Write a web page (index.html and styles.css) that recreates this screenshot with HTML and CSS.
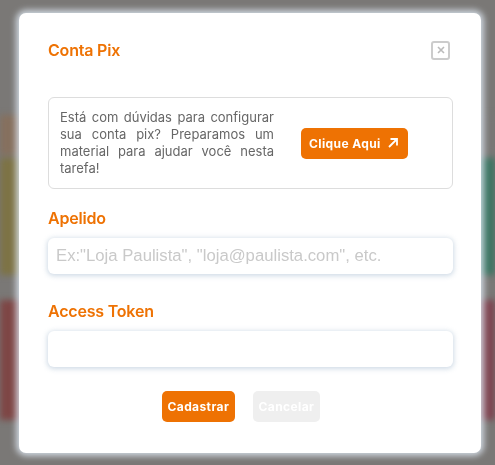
FILE: index.html
```html
<!DOCTYPE html>
<html lang="pt-BR">
<head>
    <meta charset="UTF-8">
    <meta name="viewport" content="width=device-width, initial-scale=1.0">
    <title>Conta Pix</title>
    <link rel="stylesheet" href="styles.css">
</head>
<body>

<div class="backdrop">
    <div class="bg-row">
        <div class="bg-card brown"></div>
        <div class="bg-card dark"></div>
    </div>
    <div class="bg-row tall first">
        <div class="bg-card olive"></div>
        <div class="bg-card teal"></div>
    </div>
    <div class="bg-row tall">
        <div class="bg-card red"></div>
        <div class="bg-card wine"></div>
    </div>
</div>

<div class="overlay">
    <div class="modal">
        <div class="modal-header">
            <h2>Conta Pix</h2>
            <button class="close-btn" aria-label="Fechar">
                <svg width="8" height="8" viewBox="0 0 8 8"><path d="M1 1L7 7M7 1L1 7" stroke="#bbb" stroke-width="1.6"/></svg>
            </button>
        </div>

        <div class="help-box">
            <p>Está com dúvidas para configurar sua conta pix? Preparamos um material para ajudar você nesta tarefa!</p>
            <button class="help-btn">Clique Aqui
                <svg width="12" height="12" viewBox="0 0 12 12"><path d="M2 10L10 2M3.5 2H10V8.5" stroke="#fff" stroke-width="1.8" fill="none"/></svg>
            </button>
        </div>

        <label class="field-label" for="apelido">Apelido</label>
        <input class="field-input" id="apelido" type="text" placeholder="Ex:&quot;Loja Paulista&quot;, &quot;loja@paulista.com&quot;, etc.">

        <label class="field-label" for="token">Access Token</label>
        <input class="field-input" id="token" type="text">

        <div class="actions">
            <button class="btn-primary">Cadastrar</button>
            <button class="btn-cancel">Cancelar</button>
        </div>
    </div>
</div>

</body>
</html>
```

FILE: styles.css
```css
body {
    margin: 0;
    padding: 0;
    font-family: Inter, "Liberation Sans", Arial, sans-serif;
    background-color: #7a7876;
    overflow: hidden;
}

.backdrop {
    height: 465px;
    padding-top: 115px;
    box-sizing: border-box;
    filter: blur(3px);
}
.bg-row {
    display: flex;
    justify-content: space-between;
    height: 40px;
}
.bg-row.tall {
    height: 120px;
    margin-top: 25px;
}
.bg-row.tall.first {
    height: 117px;
    margin-top: 3px;
}
.bg-card {
    width: 60px;
}
.brown { background-color: #86705e; }
.dark { background-color: #7a7876; }
.olive { background-color: #7d7345; }
.teal { background-color: #3d7563; }
.red { background-color: #7e4645; }
.wine { background-color: #7e4450; }

.overlay {
    position: fixed;
    left: 0;
    top: 0;
    width: 100%;
    height: 100%;
    padding: 13px 14px 0 19px;
    box-sizing: border-box;
}

.modal {
    background-color: #fff;
    border-radius: 7px;
    height: 440px;
    box-sizing: border-box;
    padding: 27px 28px 0 29px;
    box-shadow: 0 0 6px 3px rgba(222, 232, 242, 0.85);
}

.modal-header {
    display: flex;
    justify-content: space-between;
    align-items: center;
    height: 20px;
}
.modal-header h2 {
    margin: 0;
    font-size: 16px;
    font-weight: 600;
    color: #ee7203;
    letter-spacing: -0.2px;
}
.close-btn {
    width: 19px;
    height: 19px;
    padding: 0;
    margin-right: 3px;
    border: 2px solid #ccc;
    border-radius: 3px;
    background: #fff;
    display: flex;
    align-items: center;
    justify-content: center;
}

.help-box {
    display: flex;
    align-items: center;
    margin-top: 37px;
    height: 92px;
    box-sizing: border-box;
    border: 1px solid #ddd;
    border-radius: 6px;
    padding: 0 11px;
}
.help-box p {
    margin: 0;
    width: 214px;
    font-size: 13px;
    line-height: 17px;
    color: #666;
    text-align: justify;
}
.help-btn {
    margin-left: 27px;
    height: 31px;
    padding: 0 9px 0 8px;
    border: none;
    border-radius: 5px;
    background-color: #ee7203;
    color: #fff;
    font-family: inherit;
    font-size: 12px;
    font-weight: 700;
    letter-spacing: 0.4px;
    display: flex;
    align-items: center;
    gap: 6px;
}

.field-label {
    display: block;
    margin-top: 19px;
    font-size: 16px;
    font-weight: 600;
    color: #ee7203;
    letter-spacing: -0.2px;
    line-height: 20px;
}
.field-input {
    display: block;
    width: 100%;
    height: 36px;
    box-sizing: border-box;
    margin-top: 10px;
    padding: 0 8px;
    border: none;
    border-radius: 6px;
    background: #fff;
    box-shadow: 0 1px 5px 1px rgba(150, 175, 200, 0.45);
    font-family: "Liberation Sans", Arial, sans-serif;
    font-size: 16.7px;
    outline: none;
}
.field-label + .field-input + .field-label {
    margin-top: 27px;
}
.field-input::placeholder {
    color: #c9c9c9;
}

.actions {
    display: flex;
    justify-content: center;
    gap: 18px;
    margin-top: 24px;
    padding-right: 20px;
}
.actions button {
    height: 31px;
    border: none;
    border-radius: 5px;
    font-family: inherit;
    font-size: 12px;
    font-weight: 700;
    letter-spacing: 0.4px;
    color: #fff;
}
.btn-primary {
    width: 73px;
    background-color: #ee7203;
}
.btn-cancel {
    width: 67px;
    background-color: #efefef;
}
```
